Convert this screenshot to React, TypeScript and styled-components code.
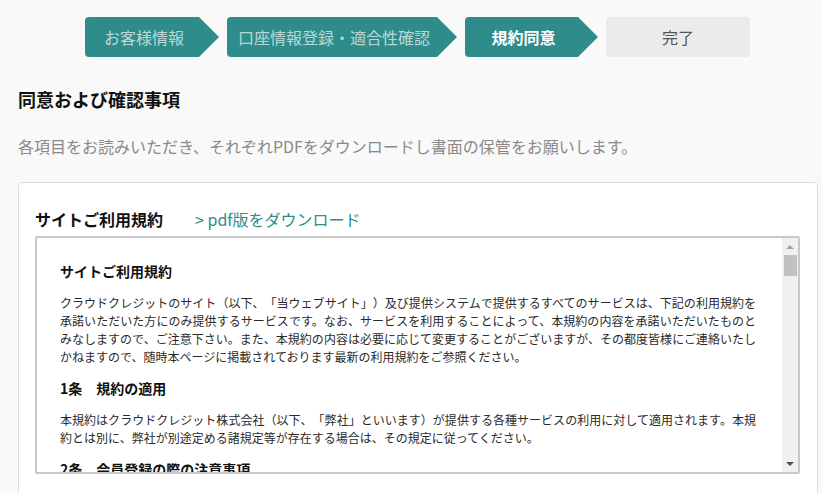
import React from 'react';
import styled, { createGlobalStyle, css } from 'styled-components';

const TEAL = '#2e8c8a';

const GlobalStyle = createGlobalStyle`
    html, body {
        margin: 0;
        padding: 0;
        background: #f9f9f9;
        font-family: 'Noto Sans CJK JP', 'Noto Sans', sans-serif;
        color: #222;
        text-spacing-trim: space-all;
    }
`;

const Page = styled.main`
    padding: 17px 4px 0 18px;
    height: 493px;
    box-sizing: border-box;
    overflow: hidden;
`;

const StepBar = styled.ol`
    display: flex;
    gap: 8px;
    margin: 0;
    padding: 0 0 0 67px;
    list-style: none;
`;

type StepState = 'done' | 'current' | 'todo';

const Step = styled.li<{ $state: StepState; $width: number }>`
    width: ${(p) => p.$width}px;
    height: 40px;
    display: flex;
    align-items: center;
    justify-content: center;
    box-sizing: border-box;
    font-size: 16px;
    border-radius: 4px;
    ${(p) =>
        p.$state === 'todo'
            ? css`
                  background: #ebebeb;
                  color: #555;
              `
            : css`
                  background: ${TEAL};
                  padding-right: 16px;
                  clip-path: polygon(0 0, calc(100% - 20px) 0, 100% 50%, calc(100% - 20px) 100%, 0 100%);
                  color: ${p.$state === 'current' ? '#fff' : 'rgba(255, 255, 255, 0.68)'};
                  font-weight: ${p.$state === 'current' ? 700 : 400};
              `}
`;

const Heading = styled.h1`
    margin: 29px 0 0;
    font-size: 18px;
    line-height: 26px;
    font-weight: 700;
    color: #111;
`;

const Lead = styled.p`
    margin: 22px 0 0;
    font-size: 16px;
    line-height: 24px;
    color: #8a8a8a;
`;

const Card = styled.section`
    margin-top: 24px;
    width: 800px;
    box-sizing: border-box;
    background: #fff;
    border: 1px solid #dcdcdc;
    border-radius: 4px;
    padding: 24px 17px 40px 16px;
`;

const CardHead = styled.div`
    display: flex;
    align-items: center;
    gap: 32px;
    height: 24px;
    margin-bottom: 5px;
`;

const CardTitle = styled.h2`
    margin: 0;
    font-size: 16px;
    font-weight: 700;
    color: #111;
`;

const PdfLink = styled.a`
    font-size: 16px;
    color: ${TEAL};
    text-decoration: none;
`;

const TermsBox = styled.div`
    display: flex;
    height: 238px;
    border: 2px solid #c9c9c9;
    border-radius: 2px;
    box-sizing: border-box;
    background: #fff;
`;

const TermsBody = styled.div`
    flex: 1;
    overflow: hidden;
    padding: 23px 0 0 23px;
    color: #2a2a2a;
`;

const TermsTitle = styled.h3`
    margin: 0 0 13px;
    font-size: 14px;
    line-height: 20px;
    font-weight: 700;
    color: #111;
`;

const TermsText = styled.p`
    margin: 0 0 12px;
    width: 696px;
    font-size: 12px;
    line-height: 18px;
`;

const Line = styled.span<{ $fill?: boolean }>`
    display: block;
    white-space: nowrap;
    text-align: left;
    ${(p) =>
        p.$fill &&
        css`
            text-align: justify;
            text-align-last: justify;
        `}
`;

const ScrollTrack = styled.div`
    width: 16px;
    background: #f0f0f0;
    display: flex;
    flex-direction: column;
    align-items: center;
`;

const ScrollArrow = styled.div<{ $down?: boolean }>`
    height: 17px;
    width: 100%;
    display: flex;
    align-items: center;
    justify-content: center;
    &::before {
        content: '';
        border-left: 4px solid transparent;
        border-right: 4px solid transparent;
        ${(p) =>
            p.$down
                ? css`
                      border-top: 4px solid #505050;
                  `
                : css`
                      border-bottom: 4px solid #a3a3a3;
                  `}
    }
`;

const ScrollThumb = styled.div`
    width: 13px;
    height: 21px;
    background: #c1c1c1;
`;

const ScrollSpace = styled.div`
    flex: 1;
`;

const steps: { label: string; state: StepState; width: number }[] = [
    { label: 'お客様情報', state: 'done', width: 134 },
    { label: '口座情報登録・適合性確認', state: 'done', width: 230 },
    { label: '規約同意', state: 'current', width: 133 },
    { label: '完了', state: 'todo', width: 144 },
];

export default function App() {
    return (
        <>
            <GlobalStyle />
            <Page>
                <StepBar>
                    {steps.map((s) => (
                        <Step key={s.label} $state={s.state} $width={s.width}>
                            {s.label}
                        </Step>
                    ))}
                </StepBar>
                <Heading>同意および確認事項</Heading>
                <Lead>各項目をお読みいただき、それぞれPDFをダウンロードし書面の保管をお願いします。</Lead>
                <Card>
                    <CardHead>
                        <CardTitle>サイトご利用規約</CardTitle>
                        <PdfLink href="#">&gt; pdf版をダウンロード</PdfLink>
                    </CardHead>
                    <TermsBox>
                        <TermsBody>
                            <TermsTitle>サイトご利用規約</TermsTitle>
                            <TermsText>
                                <Line $fill>
                                    クラウドクレジットのサイト（以下、「当ウェブサイト」）及び提供システムで提供するすべてのサービスは、下記の利用規約を
                                </Line>
                                <Line $fill>
                                    承諾いただいた方にのみ提供するサービスです。なお、サービスを利用することによって、本規約の内容を承諾いただいたものと
                                </Line>
                                <Line $fill>
                                    みなしますので、ご注意下さい。また、本規約の内容は必要に応じて変更することがございますが、その都度皆様にご連絡いたし
                                </Line>
                                <Line>かねますので、随時本ページに掲載されております最新の利用規約をご参照ください。</Line>
                            </TermsText>
                            <TermsTitle>1条　規約の適用</TermsTitle>
                            <TermsText>
                                <Line $fill>
                                    本規約はクラウドクレジット株式会社（以下、「弊社」といいます）が提供する各種サービスの利用に対して適用されます。本規
                                </Line>
                                <Line>約とは別に、弊社が別途定める諸規定等が存在する場合は、その規定に従ってください。</Line>
                            </TermsText>
                            <TermsTitle>2条　会員登録の際の注意事項</TermsTitle>
                        </TermsBody>
                        <ScrollTrack>
                            <ScrollArrow />
                            <ScrollThumb />
                            <ScrollSpace />
                            <ScrollArrow $down />
                        </ScrollTrack>
                    </TermsBox>
                </Card>
            </Page>
        </>
    );
}
